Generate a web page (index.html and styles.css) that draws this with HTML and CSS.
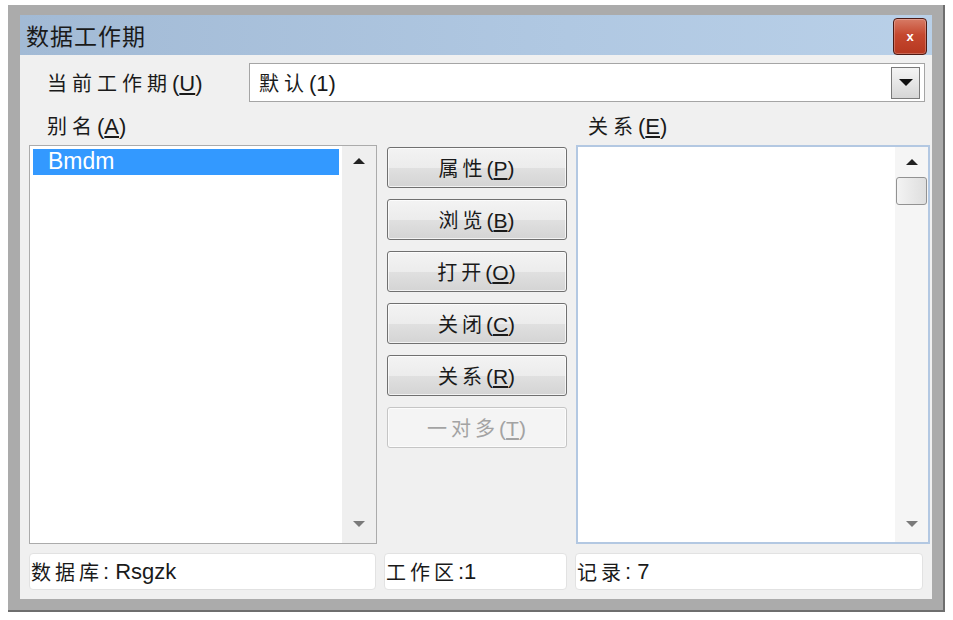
FILE: index.html
```html
<!DOCTYPE html>
<html>
    <head>
        <title>数据工作期</title>
        <link rel="stylesheet" href="styles.css">
    </head>
    <body>
        <div class="frame">
            <div class="dialog">
                <div class="titlebar">
                    <span class="title">数据工作期</span>
                    <span class="close">x</span>
                </div>

                <div class="session-row">
                    <label class="label"><span class="cjk">当前工作期</span>(<u>U</u>)</label>
                    <div class="combo">
                        <span class="combo-value"><span class="cjk">默认</span>(1)</span>
                        <span class="combo-btn"><i class="tri down black"></i></span>
                    </div>
                </div>

                <div class="main">
                    <label class="label col-left"><span class="cjk">别名</span>(<u>A</u>)</label>
                    <label class="label col-right"><span class="cjk">关系</span>(<u>E</u>)</label>

                    <div class="list alias">
                        <div class="items">
                            <div class="item selected">Bmdm</div>
                        </div>
                        <div class="scroll">
                            <i class="tri up black"></i>
                            <i class="tri down grey"></i>
                        </div>
                    </div>

                    <div class="buttons">
                        <button><span class="cjk">属性</span>(<u>P</u>)</button>
                        <button><span class="cjk">浏览</span>(<u>B</u>)</button>
                        <button><span class="cjk">打开</span>(<u>O</u>)</button>
                        <button><span class="cjk">关闭</span>(<u>C</u>)</button>
                        <button><span class="cjk">关系</span>(<u>R</u>)</button>
                        <button disabled><span class="cjk">一对多</span>(<u>T</u>)</button>
                    </div>

                    <div class="list relations">
                        <div class="items"></div>
                        <div class="scroll">
                            <i class="tri up black"></i>
                            <span class="thumb"></span>
                            <span class="spacer"></span>
                            <i class="tri down grey"></i>
                        </div>
                    </div>
                </div>

                <div class="status">
                    <div class="field db"><span class="cjk">数据库</span>: Rsgzk</div>
                    <div class="field area"><span class="cjk">工作区</span>:1</div>
                    <div class="field rec"><span class="cjk">记录</span>: 7</div>
                </div>
            </div>
        </div>
    </body>
</html>
```

FILE: styles.css
```css
* {
    box-sizing: border-box;
}

html, body {
    margin: 0;
    background: #fff;
    font-family: "Liberation Sans", "Noto Sans CJK SC", sans-serif;
    color: #1a1a1a;
}

/* CJK glyphs sit a little smaller and looser than the latin text */
.cjk {
    font-size: 20px;
    letter-spacing: 5px;
}

.frame {
    margin: 5px 0 0 8px;
    width: 937px;
    height: 607px;
    padding: 10px 11px 11px 12px;
    background: #ababab;
    border-right: 2px solid #6e6e6e;
    border-bottom: 2px solid #6e6e6e;
}

.dialog {
    width: 912px;
    height: 584px;
    background: #f0f0f0;
    display: flex;
    flex-direction: column;
}

.titlebar {
    height: 40px;
    display: flex;
    align-items: center;
    justify-content: space-between;
    padding: 0 5px 0 6px;
    background: linear-gradient(to right, #a2bad5, #b0c8e2 60%, #b9d0e8);
}

.title {
    font-size: 23px;
    letter-spacing: 1px;
}

.close {
    width: 34px;
    height: 37px;
    margin-top: 2px;
    border: 1px solid #4c1a14;
    border-radius: 4px;
    background: linear-gradient(#d77b66, #c5482f 45%, #b63820);
    color: #fff;
    font: bold 13px "Liberation Sans", sans-serif;
    display: flex;
    align-items: center;
    justify-content: center;
    box-shadow: inset 0 0 0 1px rgba(255, 255, 255, .25);
}

.label {
    font-size: 22px;
    white-space: nowrap;
}

    .label u, button u {
        text-underline-offset: 2px;
    }

.session-row {
    display: flex;
    align-items: center;
    margin-top: 8px;
    padding-left: 27px;
    height: 39px;
}

    .session-row .label {
        width: 202px;
    }

.combo {
    width: 676px;
    height: 39px;
    background: #fff;
    border: 1px solid #a5a5a5;
    display: flex;
    align-items: center;
    justify-content: space-between;
    padding: 0 4px 0 9px;
}

.combo-value {
    font-size: 22px;
}

.combo-btn {
    width: 29px;
    height: 32px;
    border: 1px solid #7a7a7a;
    background: linear-gradient(#f4f4f4, #e6e6e6 50%, #d6d6d6);
    display: flex;
    align-items: center;
    justify-content: center;
}

.tri {
    display: block;
    width: 0;
    height: 0;
    border-left: 6px solid transparent;
    border-right: 6px solid transparent;
}

    .tri.up {
        border-bottom: 6px solid #222;
    }

    .tri.down {
        border-top: 6px solid #111;
    }

    .tri.grey.down {
        border-top-color: #7a7a7a;
    }

    .combo-btn .tri {
        border-left-width: 7px;
        border-right-width: 7px;
        border-top-width: 7px;
    }

.main {
    display: grid;
    grid-template-columns: 348px 180px 354px;
    grid-template-rows: 40px 399px;
    column-gap: 9.5px;
    padding-left: 9px;
    margin-top: 3px;
}

.col-left {
    grid-column: 1;
    padding-left: 18px;
    align-self: center;
}

.col-right {
    grid-column: 3;
    padding-left: 12px;
    align-self: center;
}

.list {
    display: flex;
    background: #fff;
    border: 1px solid #ababab;
}

    .list.relations {
        border: 2px solid #b3c8e2;
    }

.items {
    flex: 1;
    padding: 3px 3px;
}

.item {
    height: 26px;
    line-height: 25px;
    font-size: 23px;
    padding-left: 15px;
}

    .item.selected {
        background: #3399ff;
        color: #fff;
    }

.scroll {
    width: 34px;
    display: flex;
    flex-direction: column;
    align-items: center;
    justify-content: space-between;
    padding: 12px 0 16px;
    background: #efefef;
}

    .relations .scroll {
        width: 33px;
        background: #f5f5f5;
        justify-content: flex-start;
        padding-top: 12px;
        padding-bottom: 15px;
    }

    .relations .scroll .spacer {
        flex: 1;
    }

.thumb {
    display: block;
    width: 31px;
    height: 28px;
    margin-top: 12px;
    border: 1px solid #929292;
    border-radius: 3px;
    background: linear-gradient(to right, #f3f3f3, #dedede);
}

.buttons {
    display: flex;
    flex-direction: column;
    gap: 11px;
    padding-top: 2px;
}

button {
    height: 41px;
    font-family: inherit;
    font-size: 21px;
    color: #1a1a1a;
    border: 1px solid #707070;
    border-radius: 3px;
    background: linear-gradient(#f3f3f3, #ececec 50%, #e0e0e0 51%, #d4d4d4);
    box-shadow: inset 0 0 0 1px rgba(255, 255, 255, .7);
    padding: 0;
}

    button .cjk {
        letter-spacing: 4px;
    }

    button:disabled {
        color: #a3a3a3;
        border-color: #c5c5c5;
        background: #f4f4f4;
    }

.status {
    display: flex;
    gap: 8px;
    padding-left: 9px;
    margin-top: 9px;
}

.field {
    height: 37px;
    background: #fff;
    border: 1px solid #e2e2e2;
    border-radius: 4px;
    font-size: 22px;
    display: flex;
    align-items: center;
    padding-left: 1px;
    white-space: pre;
}

    .field .cjk {
        letter-spacing: 4px;
    }

    .field.db {
        width: 347px;
    }

    .field.area {
        width: 183px;
    }

    .field.rec {
        width: 348px;
    }
```
